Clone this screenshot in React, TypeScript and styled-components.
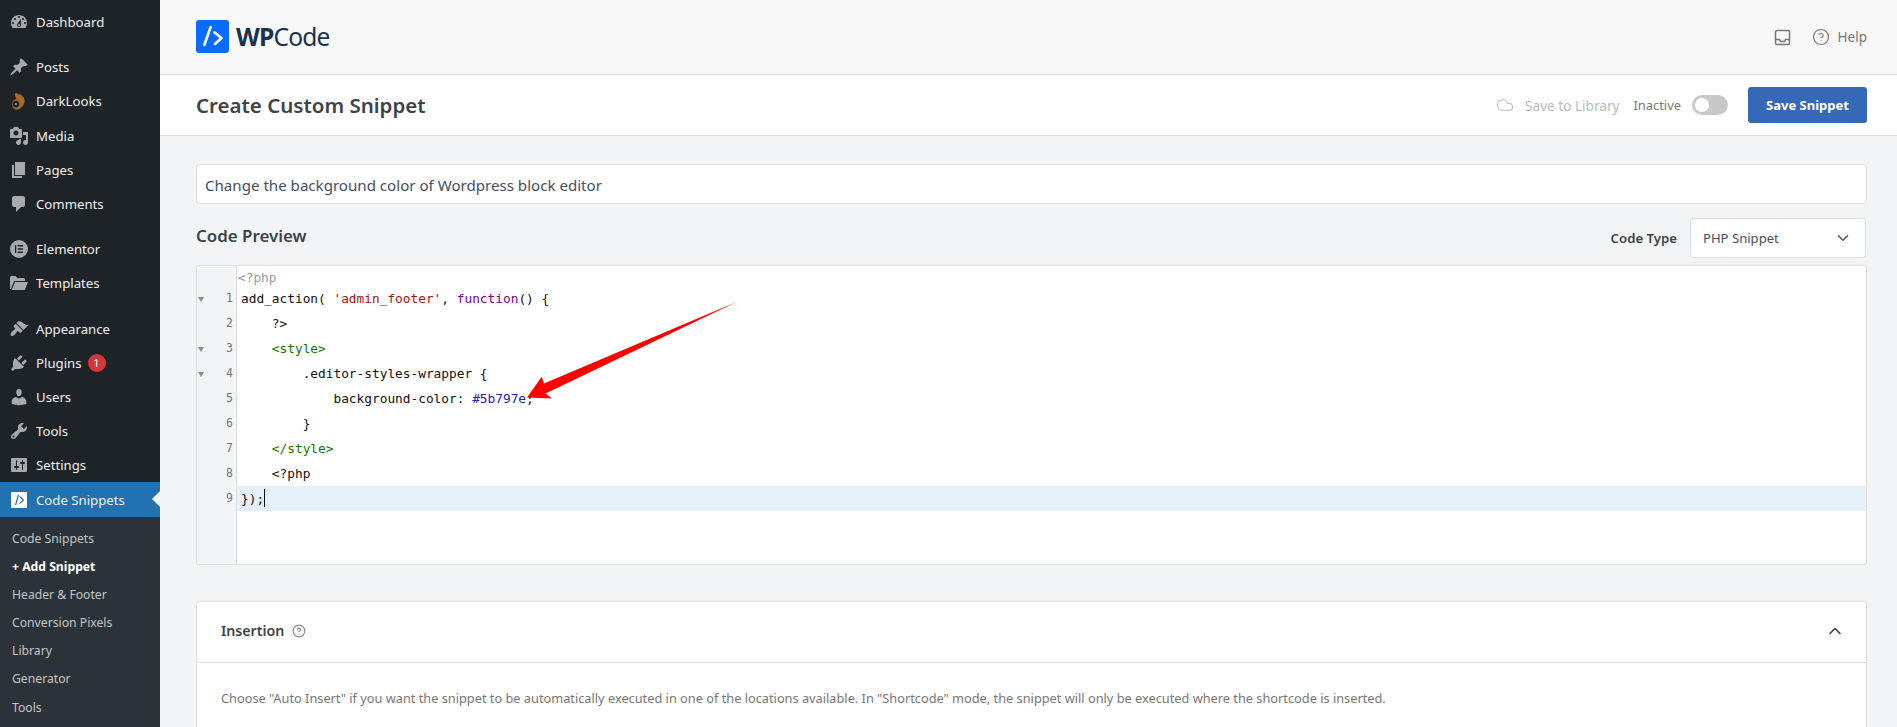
import React from "react";
import styled, { createGlobalStyle } from "styled-components";
import { ChevronDown, ChevronUp, CircleHelp, Cloud } from "lucide-react";

const uiFont = `"Noto Sans", "Open Sans", sans-serif`;
const monoFont = `"DejaVu Sans Mono", "Liberation Mono", monospace`;

const Global = createGlobalStyle`
  html, body { margin: 0; padding: 0; height: 727px; overflow: hidden; background: #f3f4f5; }
  * { box-sizing: border-box; }
  body { font-family: ${uiFont}; }
`;

const Page = styled.div`
  display: flex;
  width: 1897px;
  height: 727px;
  overflow: hidden;
`;

const Sidebar = styled.nav`
  width: 160px;
  flex: none;
  height: 727px;
  background: #1d2327;
  padding-top: 5px;
  overflow: hidden;
`;

const MenuItem = styled.div<{ $active?: boolean; $gap?: number }>`
  position: relative;
  display: flex;
  align-items: center;
  height: ${(p) => (p.$active ? 35 : 34.2)}px;
  margin-top: ${(p) => p.$gap ?? 0}px;
  padding-left: 9px;
  gap: 7px;
  font-size: 13.2px;
  color: #f0f0f1;
  background: ${(p) => (p.$active ? "#2271b1" : "transparent")};
  white-space: nowrap;

  svg { flex: none; width: 20px; height: 20px; fill: #a7aaad; }

  ${(p) =>
    p.$active &&
    `&::after {
      content: "";
      position: absolute;
      right: 0;
      top: 9px;
      border: 8px solid transparent;
      border-right-color: #f3f4f5;
      border-left-width: 0;
    }`}
`;

const Badge = styled.span`
  display: inline-flex;
  align-items: center;
  justify-content: center;
  width: 18px;
  height: 18px;
  margin-left: -1px;
  border-radius: 50%;
  background: #d63638;
  color: #fff;
  font-size: 11px;
`;

const SubMenu = styled.div`
  background: #2c3338;
  padding-top: 7.5px;
  height: 220px;
`;

const SubItem = styled.div<{ $current?: boolean }>`
  height: 28.1px;
  line-height: 28px;
  padding-left: 12px;
  font-size: 12.2px;
  font-weight: ${(p) => (p.$current ? 700 : 400)};
  color: ${(p) => (p.$current ? "#fff" : "#c3c4c7")};
  white-space: nowrap;
`;

const Main = styled.main`
  flex: 1;
  min-width: 0;
  display: flex;
  flex-direction: column;
`;

const TopBar = styled.header`
  height: 75px;
  flex: none;
  background: #f8f8f9;
  border-bottom: 1px solid #dfdfdf;
  display: flex;
  align-items: center;
  justify-content: space-between;
  padding: 0 30px 0 36px;
`;

const Brand = styled.div`
  display: flex;
  align-items: center;
  gap: 7px;
  margin-top: -1px;
`;

const BrandMark = styled.svg`
  width: 33px;
  height: 33px;
  display: block;
`;

const BrandName = styled.div`
  font-family: ${uiFont};
  font-size: 24.6px;
  line-height: 33px;
  color: #1b324a;
  letter-spacing: -0.8px;

  b { font-weight: 700; }
`;

const TopLinks = styled.div`
  display: flex;
  align-items: center;
  color: #777;
  font-size: 13.5px;
`;

const InboxIcon = styled.svg`
  width: 17px;
  height: 17px;
  margin-right: 21px;
`;

const HelpLink = styled.div`
  display: flex;
  align-items: center;
  gap: 8px;
  svg { width: 18px; height: 18px; }
`;

const TitleBar = styled.div`
  height: 61px;
  flex: none;
  background: #fff;
  border-bottom: 1px solid #dfdfdf;
  display: flex;
  align-items: center;
  justify-content: space-between;
  padding: 0 30px 0 36px;
`;

const PageTitle = styled.h1`
  margin: 0;
  font-size: 20.5px;
  font-weight: 600;
  color: #3c434a;
`;

const TitleActions = styled.div`
  display: flex;
  align-items: center;
`;

const SaveLibrary = styled.div`
  display: flex;
  align-items: center;
  gap: 11px;
  font-size: 13.6px;
  color: #bbb;
  margin-right: 14px;
  svg { width: 18px; height: 18px; stroke-width: 1.4; }
`;

const StatusLabel = styled.span`
  font-size: 12.9px;
  color: #777;
  margin-right: 11px;
`;

const Toggle = styled.span`
  position: relative;
  width: 36px;
  height: 20px;
  border-radius: 10px;
  background: #c8c8c8;
  margin-right: 20px;

  &::after {
    content: "";
    position: absolute;
    left: 3px;
    top: 3px;
    width: 14px;
    height: 14px;
    border-radius: 50%;
    background: #fff;
  }
`;

const SaveButton = styled.button`
  width: 119px;
  height: 36px;
  border: 0;
  border-radius: 3px;
  background: #3568b7;
  color: #fff;
  font-family: ${uiFont};
  font-size: 13px;
  font-weight: 700;
`;

const Content = styled.div`
  flex: 1;
  min-height: 0;
  padding: 28px 30px 0 36px;
`;

const NameInput = styled.div`
  height: 40px;
  background: #fff;
  border: 1px solid #dfdfdf;
  border-radius: 3px;
  display: flex;
  align-items: center;
  padding: 2px 0 0 8px;
  font-size: 15.1px;
  color: #454f5e;
`;

const PreviewHead = styled.div`
  display: flex;
  align-items: center;
  justify-content: space-between;
  height: 40px;
  margin-top: 14px;
`;

const SectionTitle = styled.h2`
  margin: 0 0 6px;
  font-size: 16.9px;
  font-weight: 600;
  color: #3c434a;
`;

const TypeRow = styled.div`
  display: flex;
  align-items: center;
  gap: 13px;
  margin-right: 1px;
`;

const TypeLabel = styled.label`
  font-size: 13.2px;
  font-weight: 600;
  color: #3c434a;
`;

const SelectBox = styled.div`
  width: 176px;
  height: 40px;
  background: #fff;
  border: 1px solid #dfdfdf;
  border-radius: 3px;
  display: flex;
  align-items: center;
  justify-content: space-between;
  padding: 0 13px 0 12px;
  font-size: 13.1px;
  color: #454f5e;
  svg { width: 18px; height: 18px; color: #50575e; }
`;

const Editor = styled.div`
  position: relative;
  display: flex;
  height: 300px;
  margin-top: 7px;
  background: #fff;
  border: 1px solid #dfdfdf;
  border-radius: 3px;
  overflow: hidden;
  font-family: ${monoFont};
  font-size: 12.8px;
`;

const Gutter = styled.div`
  width: 40px;
  flex: none;
  background: #f3f4f5;
  border-right: 1px solid #dfdfdf;
  padding-top: 19.5px;
`;

const GutterRow = styled.div`
  position: relative;
  height: 25px;
  line-height: 25px;
  text-align: right;
  padding-right: 3px;
  font-size: 11.5px;
  color: #777;
`;

const FoldMark = styled.span`
  position: absolute;
  left: 1px;
  top: 11px;
  border-style: solid;
  border-width: 5px 3px 0;
  border-color: #8a8f94 transparent transparent;
`;

const CodeArea = styled.div`
  flex: 1;
  min-width: 0;
`;

const Placeholder = styled.div`
  height: 19.5px;
  line-height: 24px;
  padding-left: 1px;
  color: #999;
`;

const CodeLine = styled.pre<{ $active?: boolean }>`
  margin: 0;
  height: 25px;
  padding-left: 4px;
  font: inherit;
  line-height: 25px;
  color: #111;
  background: ${(p) => (p.$active ? "#e6f0fb" : "transparent")};
`;

const Str = styled.span`color: #a11;`;
const Kw = styled.span`color: #708;`;
const Tag = styled.span`color: #170;`;
const Num = styled.span`color: #22a;`;

const Caret = styled.span`
  display: inline-block;
  width: 1px;
  height: 18px;
  background: #111;
  vertical-align: -4px;
`;

const ArrowOverlay = styled.svg`
  position: absolute;
  left: 0;
  top: 0;
  width: 100%;
  height: 100%;
  pointer-events: none;
`;

const Panel = styled.section`
  margin-top: 36px;
  height: 200px;
  background: #fff;
  border: 1px solid #dfdfdf;
  border-radius: 3px 3px 0 0;
`;

const PanelHead = styled.div`
  height: 61px;
  border-bottom: 1px solid #dfdfdf;
  display: flex;
  align-items: center;
  padding: 0 21px 3px 24px;
  color: #3c434a;
  svg { color: #3c434a; }
`;

const PanelTitle = styled.h3`
  margin: 0 8px 0 0;
  font-size: 14.2px;
  font-weight: 600;
`;

const HintIcon = styled(CircleHelp)`
  width: 14px;
  height: 14px;
  && { color: #8a8a8a; }
`;

const Collapse = styled(ChevronUp)`
  margin-left: auto;
  width: 20px;
  height: 20px;
`;

const PanelBody = styled.p`
  margin: 26px 0 0 24px;
  font-size: 12.78px;
  color: #777;
`;

const DASHBOARD = "M3.76 16h12.48c1.1-1.37 1.76-3.11 1.76-5 0-4.42-3.58-8-8-8s-8 3.58-8 8c0 1.89.66 3.63 1.76 5zM10 4c.55 0 1 .45 1 1s-.45 1-1 1-1-.45-1-1 .45-1 1-1zM6 6c.55 0 1 .45 1 1s-.45 1-1 1-1-.45-1-1 .45-1 1-1zm8 0c.55 0 1 .45 1 1s-.45 1-1 1-1-.45-1-1 .45-1 1-1zm-5.37 5.55L12 7v6c0 1.1-.9 2-2 2s-2-.9-2-2c0-.57.24-1.08.63-1.45zM4 10c.55 0 1 .45 1 1s-.45 1-1 1-1-.45-1-1 .45-1 1-1zm12 0c.55 0 1 .45 1 1s-.45 1-1 1-1-.45-1-1 .45-1 1-1zm-5 3c0-.55-.45-1-1-1s-1 .45-1 1 .45 1 1 1 1-.45 1-1z";
const PIN = "M10.44 3.02l1.82-1.82 6.36 6.35-1.83 1.82c-1.05-.68-2.48-.57-3.41.36l-.75.75c-.92.93-1.04 2.35-.35 3.41l-1.83 1.82-2.41-2.41-2.8 2.79c-.42.42-3.38 2.71-3.8 2.29s1.86-3.39 2.28-3.81l2.79-2.79L4.1 9.36l1.83-1.82c1.05.69 2.48.57 3.4-.36l.75-.75c.93-.92 1.05-2.35.36-3.41z";
const MEDIA = "M13 11V4c0-.55-.45-1-1-1h-1.67L9 1H5L3.67 3H2c-.55 0-1 .45-1 1v7c0 .55.45 1 1 1h10c.55 0 1-.45 1-1zM7 4.5c1.38 0 2.5 1.12 2.5 2.5S8.38 9.5 7 9.5 4.5 8.38 4.5 7 5.62 4.5 7 4.5zM14 6h5v10.5c0 1.38-1.12 2.5-2.5 2.5S14 17.88 14 16.5s1.12-2.5 2.5-2.5c.17 0 .34.02.5.05V9h-3V6zm-4 8.05V13h2v3.5c0 1.38-1.12 2.5-2.5 2.5S7 17.88 7 16.5 8.12 14 9.5 14c.17 0 .34.02.5.05z";
const PAGES = "M6 15V2h10v13H6zm-1 1h8v2H3V5h2v11z";
const COMMENT = "M5 2h9c1.1 0 2 .9 2 2v7c0 1.1-.9 2-2 2h-2l-5 5v-5H5c-1.1 0-2-.9-2-2V4c0-1.1.9-2 2-2z";
const ELEMENTOR = "M10 1a9 9 0 1 0 0 18 9 9 0 0 0 0-18zM7.2 14H6V6h1.2v8zM14 14H8.6v-1.6H14V14zm0-3.2H8.6V9.2H14v1.6zm0-3.2H8.6V6H14v1.6z";
const FOLDER = "M1 16V4.5C1 3.7 1.6 3 2.4 3h4.2l1.6 2h6.4c.8 0 1.4.6 1.4 1.4V8H5.2L1.8 16H1zm1.6 1L6 9h13l-3.2 8H2.6z";
const BRUSH = "M14.48 11.06L7.41 3.99l1.5-1.5c.5-.56 2.3-.47 3.51.32 1.21.8 1.43 1.28 2.91 2.1 1.18.64 2.45 1.26 4.45.85zm-.71.71L6.7 4.7 4.93 6.47c-.39.39-.39 1.02 0 1.41l1.06 1.06c.39.39.39 1.03 0 1.42-.6.6-1.43 1.11-2.21 1.69-.35.26-.7.53-1.01.84-1.43 1.43-1.4 3.04-.8 3.64.6.6 2.21.63 3.64-.8.31-.31.58-.66.84-1.01.58-.78 1.09-1.61 1.69-2.21.39-.39 1.03-.39 1.42 0l1.06 1.06c.39.39 1.02.39 1.41 0z";
const PLUGIN = "M13.11 4.36L9.87 7.6 8 5.73l3.24-3.24c.35-.34 1.05-.2 1.56.32.52.51.66 1.21.31 1.55zm-8 1.77l.91-1.12 9.01 9.01-1.19.84c-.71.71-2.63 1.16-3.82 1.16H6.14L4.9 17.26c-.59.59-1.54.59-2.12 0-.59-.58-.59-1.53 0-2.12l1.24-1.24v-3.88c0-1.13.4-3.19 1.09-3.89zm7.26 3.97l3.24-3.24c.34-.35 1.04-.21 1.55.31.52.51.66 1.21.31 1.55l-3.24 3.25z";
const USERS = "M10 9.25c-2.27 0-2.73-3.44-2.73-3.44C7 4.02 7.82 2 9.97 2c2.16 0 2.98 2.02 2.71 3.81 0 0-.41 3.44-2.68 3.44zm0 2.57L12.72 10c2.39 0 4.52 2.33 4.52 4.53v2.49s-3.65 1.13-7.24 1.13c-3.65 0-7.24-1.13-7.24-1.13v-2.49c0-2.25 1.94-4.48 4.47-4.48z";
const TOOLS = "M16.68 9.77c-1.34 1.34-3.3 1.67-4.95.99l-5.41 6.52c-.99.99-2.59.99-3.58 0s-.99-2.59 0-3.57l6.52-5.42c-.68-1.65-.35-3.61.99-4.95 1.28-1.28 3.12-1.62 4.72-1.06l-2.89 2.89 2.82 2.82 2.86-2.87c.53 1.58.18 3.39-1.08 4.65zM3.81 16.21c.4.39 1.04.39 1.43 0 .4-.4.4-1.04 0-1.43-.39-.4-1.03-.4-1.43 0-.39.39-.39 1.03 0 1.43z";
const SETTINGS = "M18 16V4c0-.55-.45-1-1-1H3c-.55 0-1 .45-1 1v12c0 .55.45 1 1 1h14c.55 0 1-.45 1-1zM8 11h1c.55 0 1 .45 1 1s-.45 1-1 1H8v1.5c0 .28-.22.5-.5.5s-.5-.22-.5-.5V13H6c-.55 0-1-.45-1-1s.45-1 1-1h1V5.5c0-.28.22-.5.5-.5s.5.22.5.5V11zm5-2h-1c-.55 0-1-.45-1-1s.45-1 1-1h1V5.5c0-.28.22-.5.5-.5s.5.22.5.5V7h1c.55 0 1 .45 1 1s-.45 1-1 1h-1v5.5c0 .28-.22.5-.5.5s-.5-.22-.5-.5V9z";

function MenuIcon({ d }: { d: string }) {
  return (
    <svg viewBox="0 0 20 20">
      <path d={d} />
    </svg>
  );
}

// hand making an "ok" sign, the ring sits low on the left
function DarkLooksIcon() {
  return (
    <svg viewBox="0 0 20 20" style={{ fill: "#a86a26" }}>
      <path
        fillRule="evenodd"
        d="M6.5 2.2c1-.4 2.2.2 3 1.6.5-.6 1.5-.7 2.3-.2.9.5 1.2 1.3 1 1.9.9-.1 1.7.4 2.1 1.3.9 2 .9 4.6-.3 6.8-1.2 2.3-3.4 5-6.6 5C4.9 18.6 3 16.2 3 13.3c0-2.7 1.8-4.8 4.3-5.3L5.9 4.3c-.3-.9 0-1.8.6-2.1zM6.9 9.7a3.4 3.4 0 1 0 0 6.8 3.4 3.4 0 0 0 0-6.8z"
      />
      <circle cx="6.9" cy="13.1" r="1.1" style={{ fill: "#8c8f94" }} />
    </svg>
  );
}

function SnippetIcon() {
  return (
    <svg viewBox="0 0 20 20" style={{ fill: "#fff" }}>
      <path fillRule="evenodd" d="M2.5 2h15a.5.5 0 0 1 .5.5v15a.5.5 0 0 1-.5.5h-15a.5.5 0 0 1-.5-.5v-15a.5.5 0 0 1 .5-.5zM8.7 5 6 15h1.3L10 5H8.7zm2.3 1-.8 1 3.2 3-3.2 3 .8 1 4.2-4-4.2-4z" />
    </svg>
  );
}

function Logo() {
  return (
    <BrandMark viewBox="0 0 33 33">
      <rect width="33" height="33" rx="3" fill="#0a6cff" />
      <path d="M14.7 7 8.3 25M18.5 12.5 25.5 18 19 24" fill="none" stroke="#fff" strokeWidth="2.6" strokeLinecap="round" strokeLinejoin="round" />
    </BrandMark>
  );
}

const subItems = ["Code Snippets", "+ Add Snippet", "Header & Footer", "Conversion Pixels", "Library", "Generator", "Tools"];
const foldedLines = [1, 3, 4];
const lineNumbers = [1, 2, 3, 4, 5, 6, 7, 8, 9];

export default function App() {
  return (
    <Page>
      <Global />
      <Sidebar>
        <MenuItem><MenuIcon d={DASHBOARD} />Dashboard</MenuItem>
        <MenuItem $gap={11}><MenuIcon d={PIN} />Posts</MenuItem>
        <MenuItem><DarkLooksIcon />DarkLooks</MenuItem>
        <MenuItem><MenuIcon d={MEDIA} />Media</MenuItem>
        <MenuItem><MenuIcon d={PAGES} />Pages</MenuItem>
        <MenuItem><MenuIcon d={COMMENT} />Comments</MenuItem>
        <MenuItem $gap={11}><MenuIcon d={ELEMENTOR} />Elementor</MenuItem>
        <MenuItem><MenuIcon d={FOLDER} />Templates</MenuItem>
        <MenuItem $gap={11}><MenuIcon d={BRUSH} />Appearance</MenuItem>
        <MenuItem><MenuIcon d={PLUGIN} />Plugins<Badge>1</Badge></MenuItem>
        <MenuItem><MenuIcon d={USERS} />Users</MenuItem>
        <MenuItem><MenuIcon d={TOOLS} />Tools</MenuItem>
        <MenuItem><MenuIcon d={SETTINGS} />Settings</MenuItem>
        <MenuItem $active><SnippetIcon />Code Snippets</MenuItem>
        <SubMenu>
          {subItems.map((label) => (
            <SubItem key={label} $current={label === "+ Add Snippet"}>{label}</SubItem>
          ))}
        </SubMenu>
      </Sidebar>

      <Main>
        <TopBar>
          <Brand>
            <Logo />
            <BrandName><b>WP</b>Code</BrandName>
          </Brand>
          <TopLinks>
            <InboxIcon viewBox="0 0 17 17" fill="none" stroke="currentColor" strokeWidth="1.5">
              <rect x="1.5" y="1.5" width="14" height="14" rx="1.5" />
              <path d="M1.5 10.5h4l1 2h4l1-2h4" />
            </InboxIcon>
            <HelpLink><CircleHelp strokeWidth={1.6} />Help</HelpLink>
          </TopLinks>
        </TopBar>

        <TitleBar>
          <PageTitle>Create Custom Snippet</PageTitle>
          <TitleActions>
            <SaveLibrary><Cloud />Save to Library</SaveLibrary>
            <StatusLabel>Inactive</StatusLabel>
            <Toggle />
            <SaveButton>Save Snippet</SaveButton>
          </TitleActions>
        </TitleBar>

        <Content>
          <NameInput>Change the background color of Wordpress block editor</NameInput>

          <PreviewHead>
            <SectionTitle>Code Preview</SectionTitle>
            <TypeRow>
              <TypeLabel>Code Type</TypeLabel>
              <SelectBox>PHP Snippet<ChevronDown /></SelectBox>
            </TypeRow>
          </PreviewHead>

          <Editor>
            <Gutter>
              {lineNumbers.map((n) => (
                <GutterRow key={n}>
                  {foldedLines.includes(n) && <FoldMark />}
                  {n}
                </GutterRow>
              ))}
            </Gutter>
            <CodeArea>
              <Placeholder>&lt;?php</Placeholder>
              <CodeLine>add_action( <Str>'admin_footer'</Str>, <Kw>function</Kw>() {"{"}</CodeLine>
              <CodeLine>    ?&gt;</CodeLine>
              <CodeLine>    <Tag>&lt;style&gt;</Tag></CodeLine>
              <CodeLine>        .editor-styles-wrapper {"{"}</CodeLine>
              <CodeLine>            background-color: <Num>#5b797e</Num>;</CodeLine>
              <CodeLine>        {"}"}</CodeLine>
              <CodeLine>    <Tag>&lt;/style&gt;</Tag></CodeLine>
              <CodeLine>    &lt;?php</CodeLine>
              <CodeLine $active>{"});"}<Caret /></CodeLine>
            </CodeArea>
            <ArrowOverlay>
              <polygon points="540.5,35.5 347,117.5 344.7,110.8 330,131.5 355,132.5 348.5,127.5" fill="#fe0000" />
            </ArrowOverlay>
          </Editor>

          <Panel>
            <PanelHead>
              <PanelTitle>Insertion</PanelTitle>
              <HintIcon />
              <Collapse />
            </PanelHead>
            <PanelBody>
              Choose "Auto Insert" if you want the snippet to be automatically executed in one of the locations available. In "Shortcode" mode, the snippet will only be executed where the shortcode is inserted.
            </PanelBody>
          </Panel>
        </Content>
      </Main>
    </Page>
  );
}
